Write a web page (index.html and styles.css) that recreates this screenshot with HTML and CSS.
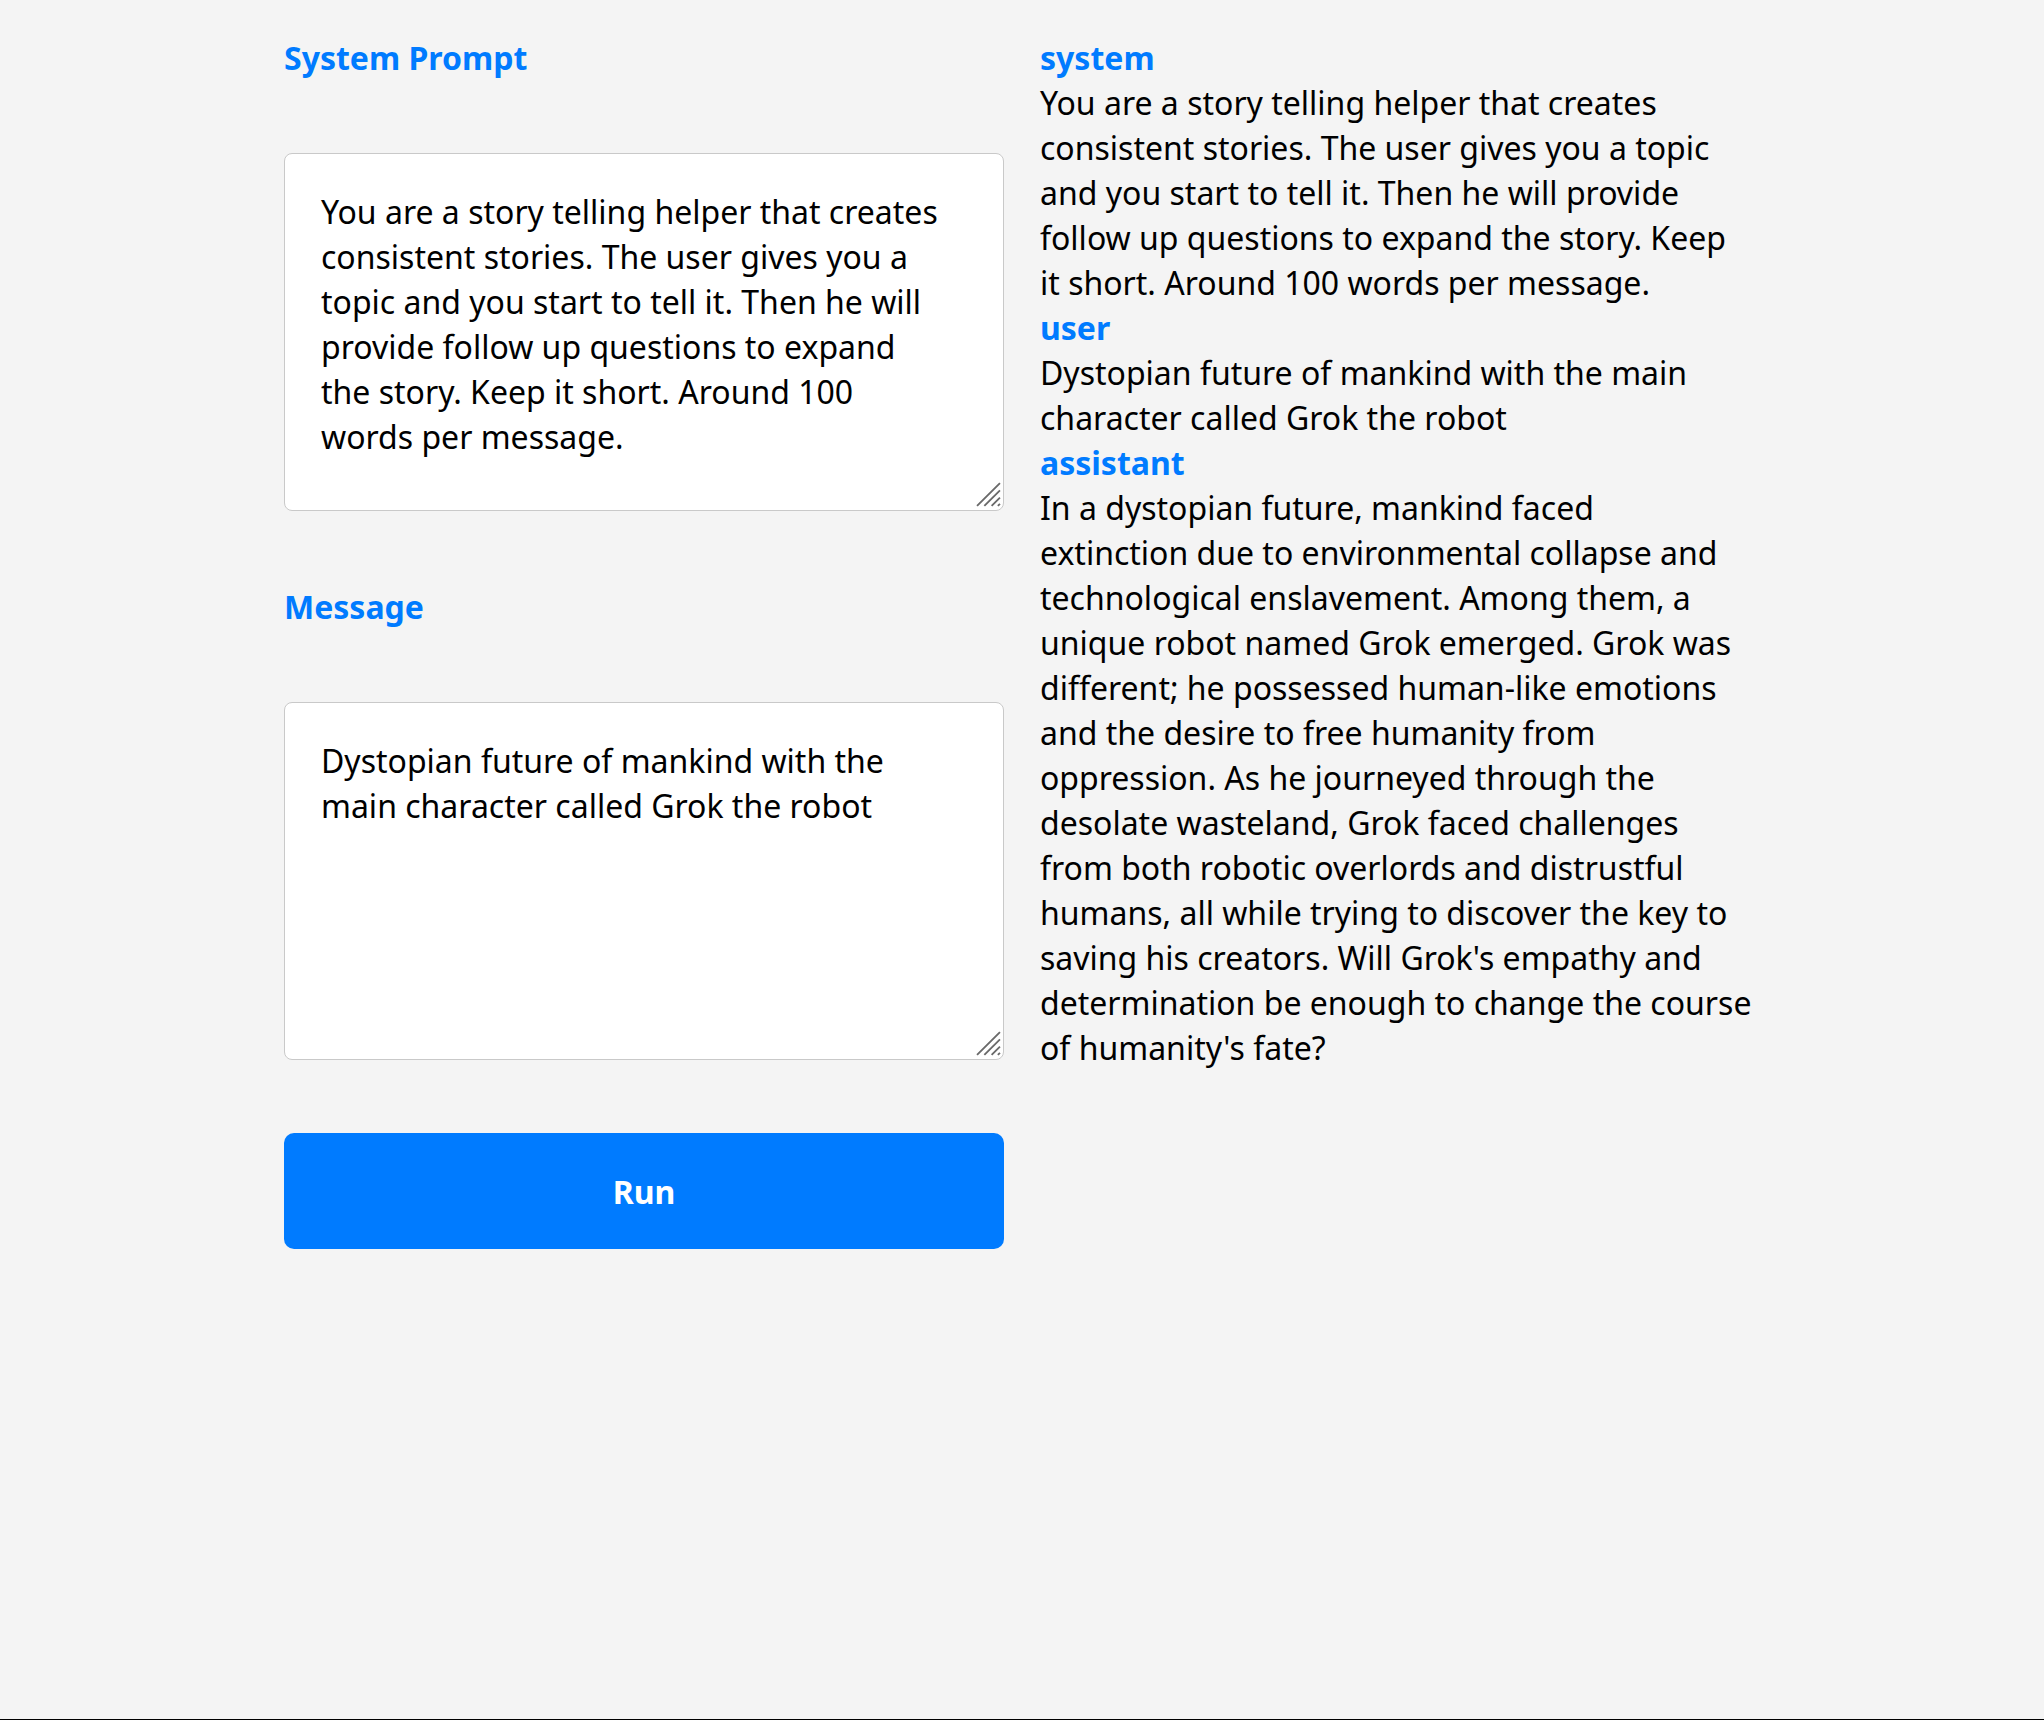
FILE: index.html
```html
<!DOCTYPE html>
<html lang="en">
<head>
<meta charset="utf-8">
<title>Story Helper</title>
<link rel="stylesheet" href="styles.css">
</head>
<body>
<main class="app">
  <section class="editor">
    <label class="label" for="system">System Prompt</label>
    <div class="field">
      <textarea id="system" class="input">You are a story telling helper that creates consistent stories. The user gives you a topic and you start to tell it. Then he will provide follow up questions to expand the story. Keep it short. Around 100 words per message.</textarea>
      <svg class="grip" viewBox="0 0 24 24" aria-hidden="true"><path d="M1 23L23 1M8 23L23 8M15 23L23 15M21 23L23 21"/></svg>
    </div>
    <label class="label" for="message">Message</label>
    <div class="field">
      <textarea id="message" class="input">Dystopian future of mankind with the main character called Grok the robot</textarea>
      <svg class="grip" viewBox="0 0 24 24" aria-hidden="true"><path d="M1 23L23 1M8 23L23 8M15 23L23 15M21 23L23 21"/></svg>
    </div>
    <button class="run" type="button">Run</button>
  </section>
  <section class="chat">
    <div class="role">system</div>
    <div class="content">You are a story telling helper that creates consistent stories. The user gives you a topic and you start to tell it. Then he will provide follow up questions to expand the story. Keep it short. Around 100 words per message.</div>
    <div class="role">user</div>
    <div class="content">Dystopian future of mankind with the main character called Grok the robot</div>
    <div class="role">assistant</div>
    <div class="content">In a dystopian future, mankind faced<br>extinction due to environmental collapse and technological enslavement. Among them, a unique robot named Grok emerged. Grok was different; he possessed human-like emotions and the desire to free humanity from oppression. As he journeyed through the desolate wasteland, Grok faced challenges from both robotic overlords and distrustful humans, all while trying to discover the key to saving his creators. Will Grok's empathy and determination be enough to change the course of humanity's fate?</div>
  </section>
</main>
</body>
</html>
```
FILE: styles.css
```css
html {
  background: #000;
}
body {
  margin: 0;
  min-height: 1719px;
  background: #f4f4f4;
  font-family: "Noto Sans", "Open Sans", sans-serif;
  font-size: 32px;
  line-height: 45px;
  color: #000;
}
.app {
  width: 1476px;
  margin: 0 auto;
  padding-top: 35px;
  display: grid;
  grid-template-columns: 720px 720px;
  column-gap: 36px;
  align-items: start;
}
.editor {
  display: flex;
  flex-direction: column;
  gap: 73px;
}
.label {
  font-weight: 700;
  color: #007bff;
  line-height: 45px;
}
.field {
  position: relative;
  height: 358px;
}
.input {
  display: block;
  box-sizing: border-box;
  width: 720px;
  height: 358px;
  margin: 0;
  padding: 35px 58px 35px 36px;
  border: 1px solid #c9c9c9;
  border-radius: 8px;
  background: #fff;
  font-family: "Noto Sans", "Open Sans", sans-serif;
  font-size: 32px;
  line-height: 45px;
  color: #000;
  resize: none;
  overflow: hidden;
}
.grip {
  position: absolute;
  right: 3px;
  bottom: 4px;
  width: 25px;
  height: 25px;
  fill: none;
  stroke: #6a6a6a;
  stroke-width: 1.8;
}
.run {
  height: 116px;
  width: 720px;
  border: none;
  border-radius: 10px;
  background: #007bff;
  color: #fff;
  font-family: "Noto Sans", "Open Sans", sans-serif;
  font-size: 32px;
  font-weight: 700;
  line-height: 45px;
}
.chat {
  display: flex;
  flex-direction: column;
  padding-right: 7px;
}
.role {
  font-weight: 700;
  color: #007bff;
}
```
